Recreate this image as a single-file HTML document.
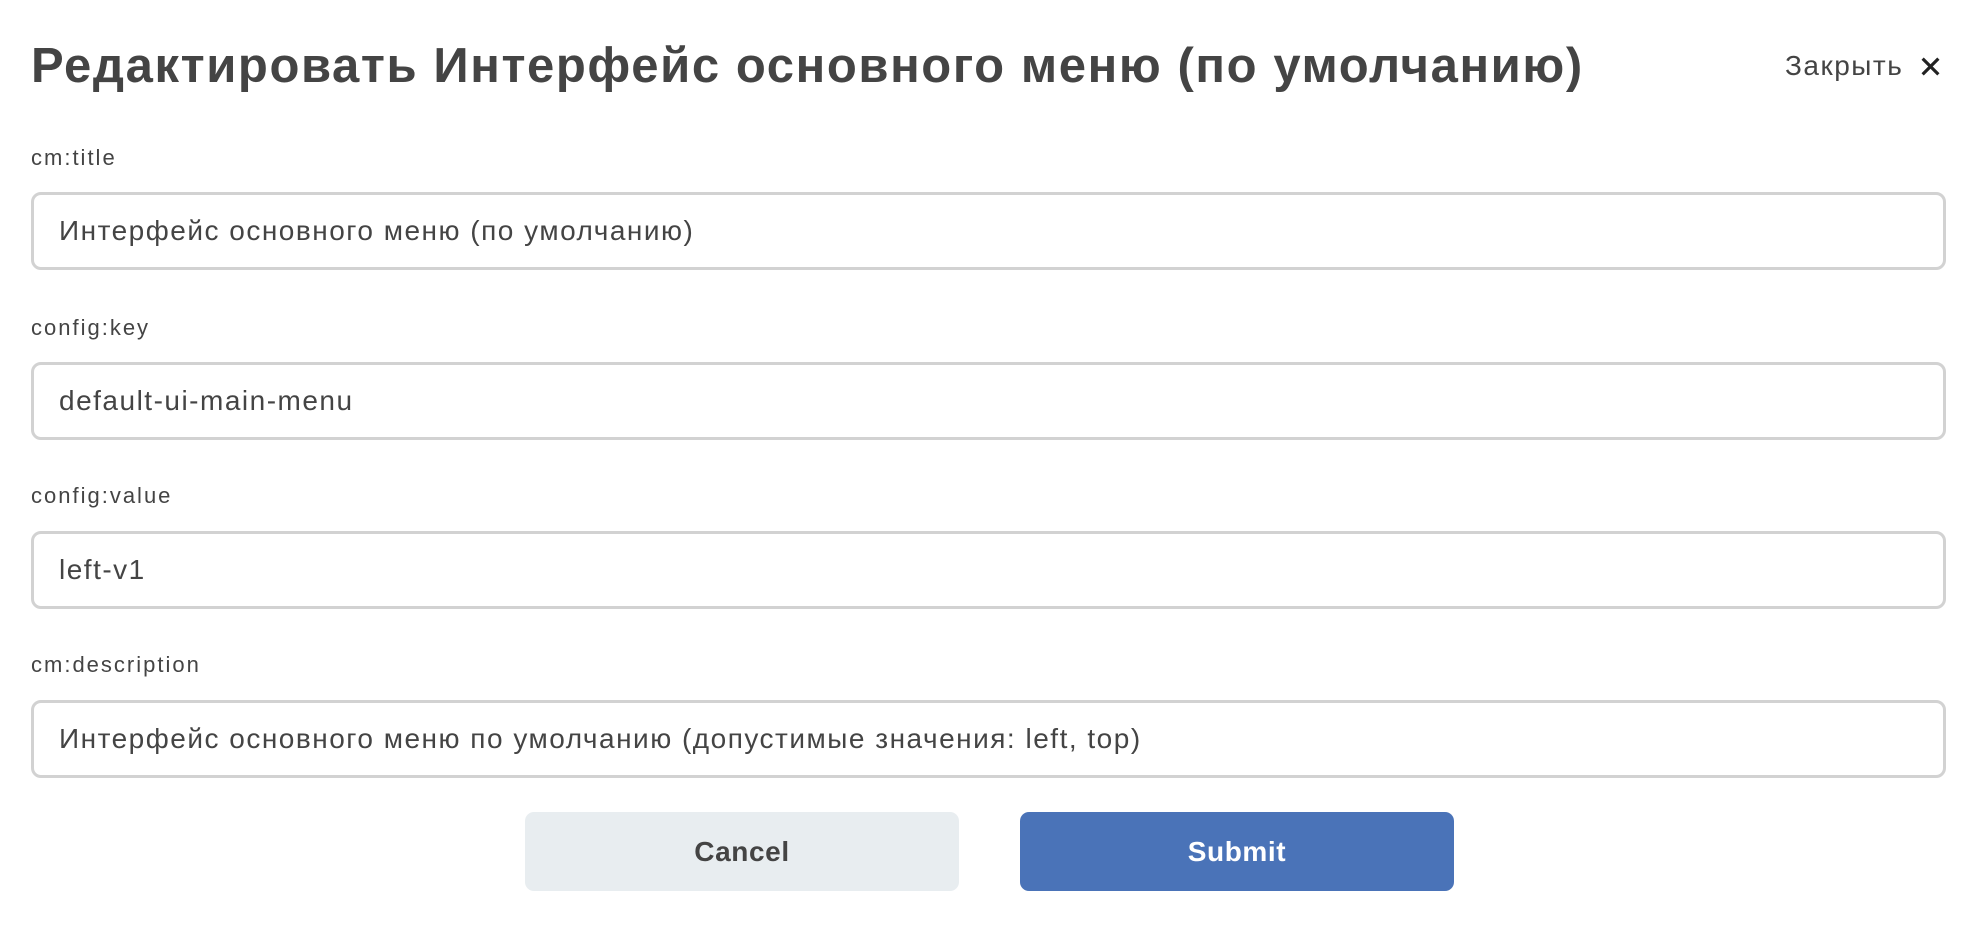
<!DOCTYPE html>
<html><head><meta charset="utf-8"><style>
*{box-sizing:border-box;margin:0;padding:0}
body{width:1963px;height:949px;background:#fff;font-family:"Liberation Sans","DejaVu Sans",sans-serif;color:#444;position:relative;overflow:hidden}
.t{position:absolute;left:31px;top:36px;font-size:49px;font-weight:bold;line-height:60px;color:#444;letter-spacing:1.6px;white-space:nowrap}
.close{position:absolute;left:1785px;top:48px;font-size:28px;line-height:36px;color:#444;letter-spacing:1.5px}
.x{position:absolute;left:1920px;top:56px;width:21px;height:21px}
.lab{position:absolute;left:31px;font-size:22px;line-height:28px;color:#444;letter-spacing:2px}
.in{position:absolute;left:31px;width:1915px;height:78px;border:3px solid #d2d2d2;border-radius:10px;padding-left:25px;font-size:28px;line-height:72px;color:#444;letter-spacing:1.5px;white-space:nowrap}
.btn{position:absolute;top:812px;height:79px;width:434px;border-radius:9px;text-align:center;font-size:28px;line-height:79px;font-weight:bold;letter-spacing:0.6px}
</style></head><body>
<div class="t">Редактировать Интерфейс основного меню (по умолчанию)</div>
<div class="close">Закрыть</div>
<svg class="x" viewBox="0 0 24 24"><path d="M3 3L21 21M21 3L3 21" stroke="#222" stroke-width="3.6" fill="none"/></svg>
<div class="lab" style="top:144px">cm:title</div>
<div class="in" style="top:192px">Интерфейс основного меню (по умолчанию)</div>
<div class="lab" style="top:314px">config:key</div>
<div class="in" style="top:362px">default-ui-main-menu</div>
<div class="lab" style="top:482px">config:value</div>
<div class="in" style="top:531px">left-v1</div>
<div class="lab" style="top:651px">cm:description</div>
<div class="in" style="top:700px">Интерфейс основного меню по умолчанию (допустимые значения: left, top)</div>
<div class="btn" style="left:525px;background:#e8edf0;color:#444">Cancel</div>
<div class="btn" style="left:1020px;background:#4a73b8;color:#fff">Submit</div>
</body></html>
